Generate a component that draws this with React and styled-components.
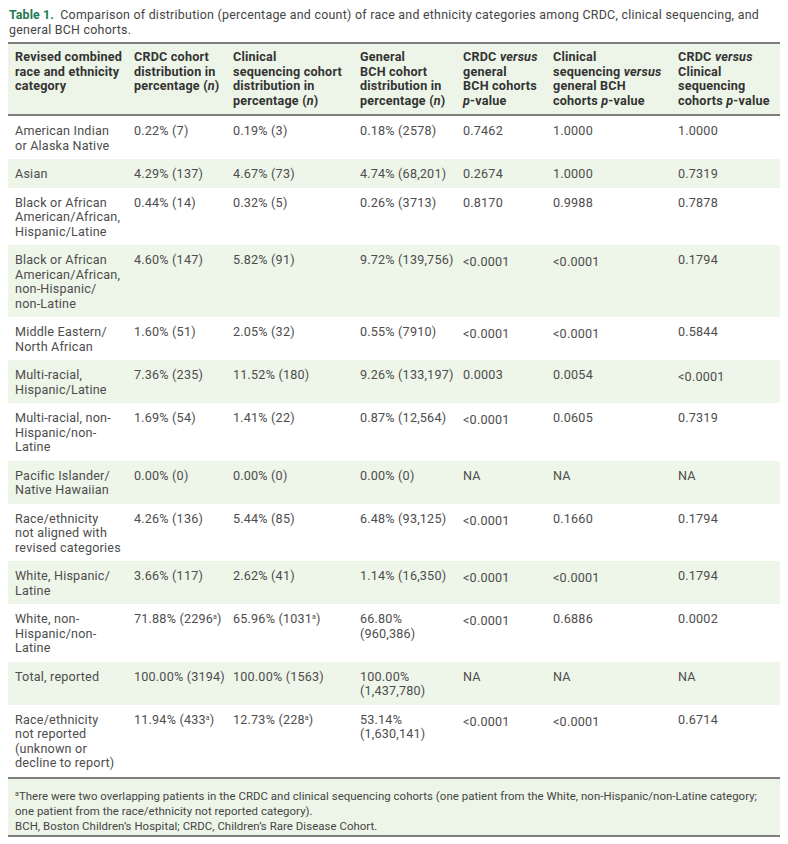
import React from 'react';
import styled, { createGlobalStyle } from 'styled-components';

const GlobalStyle = createGlobalStyle`
  body {
    margin: 0;
    background: #ffffff;
    font-family: Roboto, "Liberation Sans", sans-serif;
  }
`;

export const Page = styled.div`
  padding: 7px 8px 8px;
  width: 772px;
`;

export const Caption = styled.p`
  margin: 0 0 5px 1px;
  font-size: 12.4px;
  line-height: 15px;
  letter-spacing: 0.26px;
  color: #444444;
  b {
    color: #1f7a52;
    font-weight: 700;
    letter-spacing: 0.1px;
    margin-right: 3px;
  }
`;

export const Table = styled.table`
  width: 772px;
  border-collapse: collapse;
  table-layout: fixed;
  border-top: 2px solid #7d7d7d;
  border-bottom: 2px solid #7d7d7d;
`;

export const HeadCell = styled.th`
  background: #edf5e8;
  text-align: left;
  vertical-align: top;
  white-space: pre;
  font-weight: 700;
  font-size: 12.6px;
  line-height: 14.5px;
  letter-spacing: 0.2px;
  color: #333333;
  padding: 6px 4px 6px 7px;
  border-bottom: 2px solid #7d7d7d;
  em {
    font-style: italic;
  }
`;

export const Row = styled.tr`
  background: ${props => (props.$shade ? '#eef5e9' : '#ffffff')};
`;

export const Cell = styled.td`
  vertical-align: top;
  white-space: pre;
  font-size: 12.6px;
  line-height: 14.5px;
  letter-spacing: 0.2px;
  color: #4d4d4d;
  padding: 8px 4px 6px 7px;
  sup {
    font-size: 7px;
    vertical-align: 4px;
    line-height: 0;
  }
`;

export const Less = styled.span`
  display: inline-block;
  transform: translateY(2px);
`;

export const FootCell = styled.td`
  background: #edf5e8;
  border-top: 2px solid #7d7d7d;
  font-size: 11.4px;
  line-height: 15px;
  letter-spacing: 0.06px;
  color: #444444;
  padding: 10px 7px 1px;
  sup {
    font-size: 7px;
    vertical-align: 4px;
    line-height: 0;
  }
`;

const widths = [119, 99, 127, 103, 90, 125, 109];

const rows = [
  ['American Indian\nor Alaska Native', '0.22% (7)', '0.19% (3)', '0.18% (2578)', '0.7462', '1.0000', '1.0000'],
  ['Asian', '4.29% (137)', '4.67% (73)', '4.74% (68,201)', '0.2674', '1.0000', '0.7319'],
  ['Black or African\nAmerican/African,\nHispanic/Latine', '0.44% (14)', '0.32% (5)', '0.26% (3713)', '0.8170', '0.9988', '0.7878'],
  ['Black or African\nAmerican/African,\nnon-Hispanic/\nnon-Latine', '4.60% (147)', '5.82% (91)', '9.72% (139,756)', '<0.0001', '<0.0001', '0.1794'],
  ['Middle Eastern/\nNorth African', '1.60% (51)', '2.05% (32)', '0.55% (7910)', '<0.0001', '<0.0001', '0.5844'],
  ['Multi-racial,\nHispanic/Latine', '7.36% (235)', '11.52% (180)', '9.26% (133,197)', '0.0003', '0.0054', '<0.0001'],
  ['Multi-racial, non-\nHispanic/non-\nLatine', '1.69% (54)', '1.41% (22)', '0.87% (12,564)', '<0.0001', '0.0605', '0.7319'],
  ['Pacific Islander/\nNative Hawaiian', '0.00% (0)', '0.00% (0)', '0.00% (0)', 'NA', 'NA', 'NA'],
  ['Race/ethnicity\nnot aligned with\nrevised categories', '4.26% (136)', '5.44% (85)', '6.48% (93,125)', '<0.0001', '0.1660', '0.1794'],
  ['White, Hispanic/\nLatine', '3.66% (117)', '2.62% (41)', '1.14% (16,350)', '<0.0001', '<0.0001', '0.1794'],
  ['White, non-\nHispanic/non-\nLatine', '71.88% (2296^)', '65.96% (1031^)', '66.80%\n(960,386)', '<0.0001', '0.6886', '0.0002'],
  ['Total, reported', '100.00% (3194)', '100.00% (1563)', '100.00%\n(1,437,780)', 'NA', 'NA', 'NA'],
  ['Race/ethnicity\nnot reported\n(unknown or\ndecline to report)', '11.94% (433^)', '12.73% (228^)', '53.14%\n(1,630,141)', '<0.0001', '<0.0001', '0.6714'],
];

function renderValue(text) {
  if (text.startsWith('<')) {
    return <Less>{text}</Less>;
  }
  if (text.includes('^')) {
    const [before, after] = text.split('^');
    return (
      <>
        {before}
        <sup>a</sup>
        {after}
      </>
    );
  }
  return text;
}

export default function App() {
  return (
    <Page>
      <GlobalStyle />
      <Caption>
        <b>Table 1.</b> Comparison of distribution (percentage and count) of race and ethnicity categories among CRDC, clinical sequencing, and
        <br />
        general BCH cohorts.
      </Caption>
      <Table>
        <colgroup>
          {widths.map((w, i) => (
            <col key={i} style={{ width: w }} />
          ))}
        </colgroup>
        <thead>
          <tr>
            <HeadCell>{'Revised combined\nrace and ethnicity\ncategory'}</HeadCell>
            <HeadCell>{'CRDC cohort\ndistribution in\npercentage ('}<em>n</em>)</HeadCell>
            <HeadCell>{'Clinical\nsequencing cohort\ndistribution in\npercentage ('}<em>n</em>)</HeadCell>
            <HeadCell>{'General\nBCH cohort\ndistribution in\npercentage ('}<em>n</em>)</HeadCell>
            <HeadCell>
              CRDC <em>versus</em>
              {'\ngeneral\nBCH cohorts\n'}
              <em>p</em>-value
            </HeadCell>
            <HeadCell>
              {'Clinical\nsequencing '}
              <em>versus</em>
              {'\ngeneral BCH\ncohorts '}
              <em>p</em>-value
            </HeadCell>
            <HeadCell>
              CRDC <em>versus</em>
              {'\nClinical\nsequencing\ncohorts '}
              <em>p</em>-value
            </HeadCell>
          </tr>
        </thead>
        <tbody>
          {rows.map((row, i) => (
            <Row key={i} $shade={i % 2 === 1}>
              {row.map((value, j) => (
                <Cell key={j}>{renderValue(value)}</Cell>
              ))}
            </Row>
          ))}
        </tbody>
        <tfoot>
          <tr>
            <FootCell colSpan={7}>
              <sup>a</sup>There were two overlapping patients in the CRDC and clinical sequencing cohorts (one patient from the White, non-Hispanic/non-Latine category;
              <br />
              one patient from the race/ethnicity not reported category).
              <br />
              BCH, Boston Children’s Hospital; CRDC, Children’s Rare Disease Cohort.
            </FootCell>
          </tr>
        </tfoot>
      </Table>
    </Page>
  );
}
